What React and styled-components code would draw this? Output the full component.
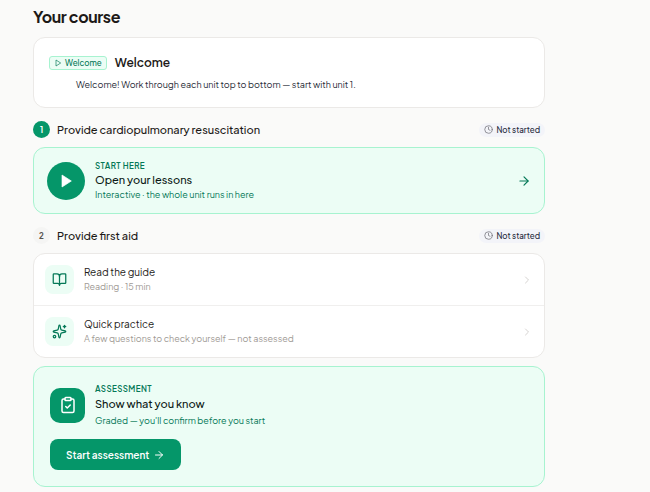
import React from "react";
import styled, { createGlobalStyle } from "styled-components";
import {
  ArrowRight,
  BookOpen,
  ChevronRight,
  ClipboardCheck,
  Clock,
  Sparkles,
} from "lucide-react";

const GlobalStyle = createGlobalStyle`
  * {
    box-sizing: border-box;
  }
  body {
    margin: 0;
    background: #fafaf9;
    color: #1c1917;
    font-family: "Plus Jakarta Sans", Inter, "Liberation Sans", sans-serif;
    font-size: 10px;
  }
  h1, h2, h3, p {
    margin: 0;
  }
  svg {
    display: block;
    flex-shrink: 0;
  }
`;

const units = [
  { number: 1, title: "Provide cardiopulmonary resuscitation", current: true },
  { number: 2, title: "Provide first aid", current: false },
];

const activities = [
  { title: "Read the guide", meta: "Reading · 15 min", Icon: BookOpen },
  {
    title: "Quick practice",
    meta: "A few questions to check yourself — not assessed",
    Icon: Sparkles,
  },
];

const PlayIcon = ({ size, filled }) => (
  <svg
    width={size}
    height={size}
    viewBox="0 0 24 24"
    fill={filled ? "currentColor" : "none"}
    stroke="currentColor"
    strokeWidth={filled ? 1 : 2}
    strokeLinejoin="round"
    aria-hidden="true"
  >
    <path d="M6 3l14 9-14 9z" />
  </svg>
);

const UnitHeader = ({ unit }) => (
  <UnitBar>
    <UnitNumber $current={unit.current}>{unit.number}</UnitNumber>
    <UnitTitle>{unit.title}</UnitTitle>
    <Status>
      <Clock size={9} color="#71717a" />
      Not started
    </Status>
  </UnitBar>
);

const App = () => {
  return (
    <Page>
      <GlobalStyle />
      <PageTitle>Your course</PageTitle>

      <WelcomeCard>
        <WelcomeHead>
          <Tag>
            <PlayIcon size={8} />
            Welcome
          </Tag>
          <WelcomeTitle>Welcome</WelcomeTitle>
        </WelcomeHead>
        <WelcomeText>
          Welcome! Work through each unit top to bottom — start with unit 1.
        </WelcomeText>
      </WelcomeCard>

      <UnitHeader unit={units[0]} />
      <LessonLink href="#lessons">
        <PlayCircle>
          <PlayIcon size={16} filled />
        </PlayCircle>
        <Details>
          <Eyebrow>START HERE</Eyebrow>
          <Heading>Open your lessons</Heading>
          <Note>Interactive · the whole unit runs in here</Note>
        </Details>
        <ArrowRight size={14} />
      </LessonLink>

      <UnitHeader unit={units[1]} />
      <ActivityList>
        {activities.map(({ title, meta, Icon }) => (
          <li key={title}>
            <ActivityLink href="#activity">
              <ActivityIcon>
                <Icon size={15} />
              </ActivityIcon>
              <Details>
                <ActivityTitle>{title}</ActivityTitle>
                <ActivityMeta>{meta}</ActivityMeta>
              </Details>
              <ChevronRight size={12} color="#d6d3d1" />
            </ActivityLink>
          </li>
        ))}
      </ActivityList>

      <Assessment>
        <AssessmentHead>
          <AssessmentIcon>
            <ClipboardCheck size={18} />
          </AssessmentIcon>
          <Details>
            <Eyebrow>ASSESSMENT</Eyebrow>
            <Heading $large>Show what you know</Heading>
            <Note>Graded — you'll confirm before you start</Note>
          </Details>
        </AssessmentHead>
        <StartButton type="button">
          Start assessment
          <ArrowRight size={12} />
        </StartButton>
      </Assessment>
    </Page>
  );
};

const Page = styled.main`
  max-width: 545px;
  padding: 5px 0 5px 33px;
`;

const PageTitle = styled.h1`
  margin-bottom: 8px;
  font-size: 16px;
  line-height: 24px;
  font-weight: 700;
  letter-spacing: -0.025em;
`;

const WelcomeCard = styled.section`
  padding: 17px 15px 15px;
  border: 1px solid #ebe9e7;
  border-radius: 12px;
  background: #fff;
`;

const WelcomeHead = styled.div`
  display: flex;
  align-items: center;
  gap: 8px;
`;

const Tag = styled.span`
  display: flex;
  align-items: center;
  gap: 3px;
  height: 14px;
  padding: 0 4px;
  border: 1px solid #a7f3d0;
  border-radius: 3px;
  background: #ecfdf5;
  color: #047857;
  font-size: 8px;
  font-weight: 500;
`;

const WelcomeTitle = styled.h2`
  font-size: 12px;
  line-height: 16px;
  font-weight: 600;
`;

const WelcomeText = styled.p`
  margin: 7px 0 0 27px;
  font-size: 9px;
  line-height: 14px;
  color: #292d38;
`;

const UnitBar = styled.header`
  display: flex;
  align-items: center;
  gap: 7px;
  margin: 13px 0 9px;
`;

const UnitNumber = styled.span`
  display: grid;
  place-items: center;
  width: 17px;
  height: 17px;
  border-radius: 50%;
  background: ${({ $current }) => ($current ? "#059669" : "#f5f5f4")};
  color: ${({ $current }) => ($current ? "#fff" : "#57534e")};
  font-size: 8px;
  font-weight: 700;
`;

const UnitTitle = styled.h2`
  flex: 1;
  font-size: 11px;
  line-height: 16px;
  font-weight: 500;
`;

const Status = styled.span`
  display: flex;
  align-items: center;
  gap: 3px;
  height: 14px;
  padding: 0 5px;
  border-radius: 7px;
  background: #f3f4f9;
  color: #272b3c;
  font-size: 8px;
  font-weight: 500;
`;

const LessonLink = styled.a`
  display: flex;
  align-items: center;
  gap: 10px;
  padding: 12px 13px;
  border: 1px solid #a7f3d0;
  border-radius: 12px;
  background: #ecfdf5;
  color: #047857;
  text-decoration: none;
`;

const PlayCircle = styled.span`
  display: grid;
  place-items: center;
  width: 38px;
  height: 38px;
  border-radius: 50%;
  background: #059669;
  color: #fff;
`;

const Details = styled.div`
  flex: 1;
  min-width: 0;
`;

const Eyebrow = styled.p`
  font-size: 8px;
  line-height: 12px;
  font-weight: 600;
  color: #047857;
  letter-spacing: 0.05em;
`;

const Heading = styled.h3`
  margin-bottom: ${({ $large }) => ($large ? "1px" : "0")};
  font-size: 11px;
  line-height: ${({ $large }) => ($large ? "18px" : "16px")};
  font-weight: 500;
  color: #0c1a15;
`;

const Note = styled.p`
  font-size: 9px;
  line-height: 13px;
  color: #047857;
`;

const ActivityList = styled.ul`
  margin: 0;
  padding: 0;
  list-style: none;
  border: 1px solid #ebe9e7;
  border-radius: 12px;
  background: #fff;

  li + li {
    border-top: 1px solid #f0efee;
  }
`;

const ActivityLink = styled.a`
  display: flex;
  align-items: center;
  gap: 10px;
  padding: 11px;
  color: inherit;
  text-decoration: none;
`;

const ActivityIcon = styled.span`
  display: grid;
  place-items: center;
  width: 29px;
  height: 29px;
  border-radius: 8px;
  background: #ecfdf5;
  color: #047857;
`;

const ActivityTitle = styled.h3`
  font-size: 10px;
  line-height: 15px;
  font-weight: 400;
`;

const ActivityMeta = styled.p`
  font-size: 9px;
  line-height: 14px;
  color: #a09a95;
`;

const Assessment = styled.section`
  margin-top: 8px;
  padding: 16px;
  border: 1px solid #a7f3d0;
  border-radius: 12px;
  background: #ecfdf5;
`;

const AssessmentHead = styled.div`
  display: flex;
  align-items: center;
  gap: 10px;
`;

const AssessmentIcon = styled.span`
  display: grid;
  place-items: center;
  width: 35px;
  height: 35px;
  border-radius: 10px;
  background: #059669;
  color: #fff;
`;

const StartButton = styled.button`
  display: flex;
  align-items: center;
  gap: 4px;
  height: 31px;
  margin-top: 12px;
  padding: 0 16px;
  border: 0;
  border-radius: 8px;
  background: #059669;
  color: #fff;
  font-family: inherit;
  font-size: 10px;
  font-weight: 600;
  cursor: pointer;
`;

export default App;
